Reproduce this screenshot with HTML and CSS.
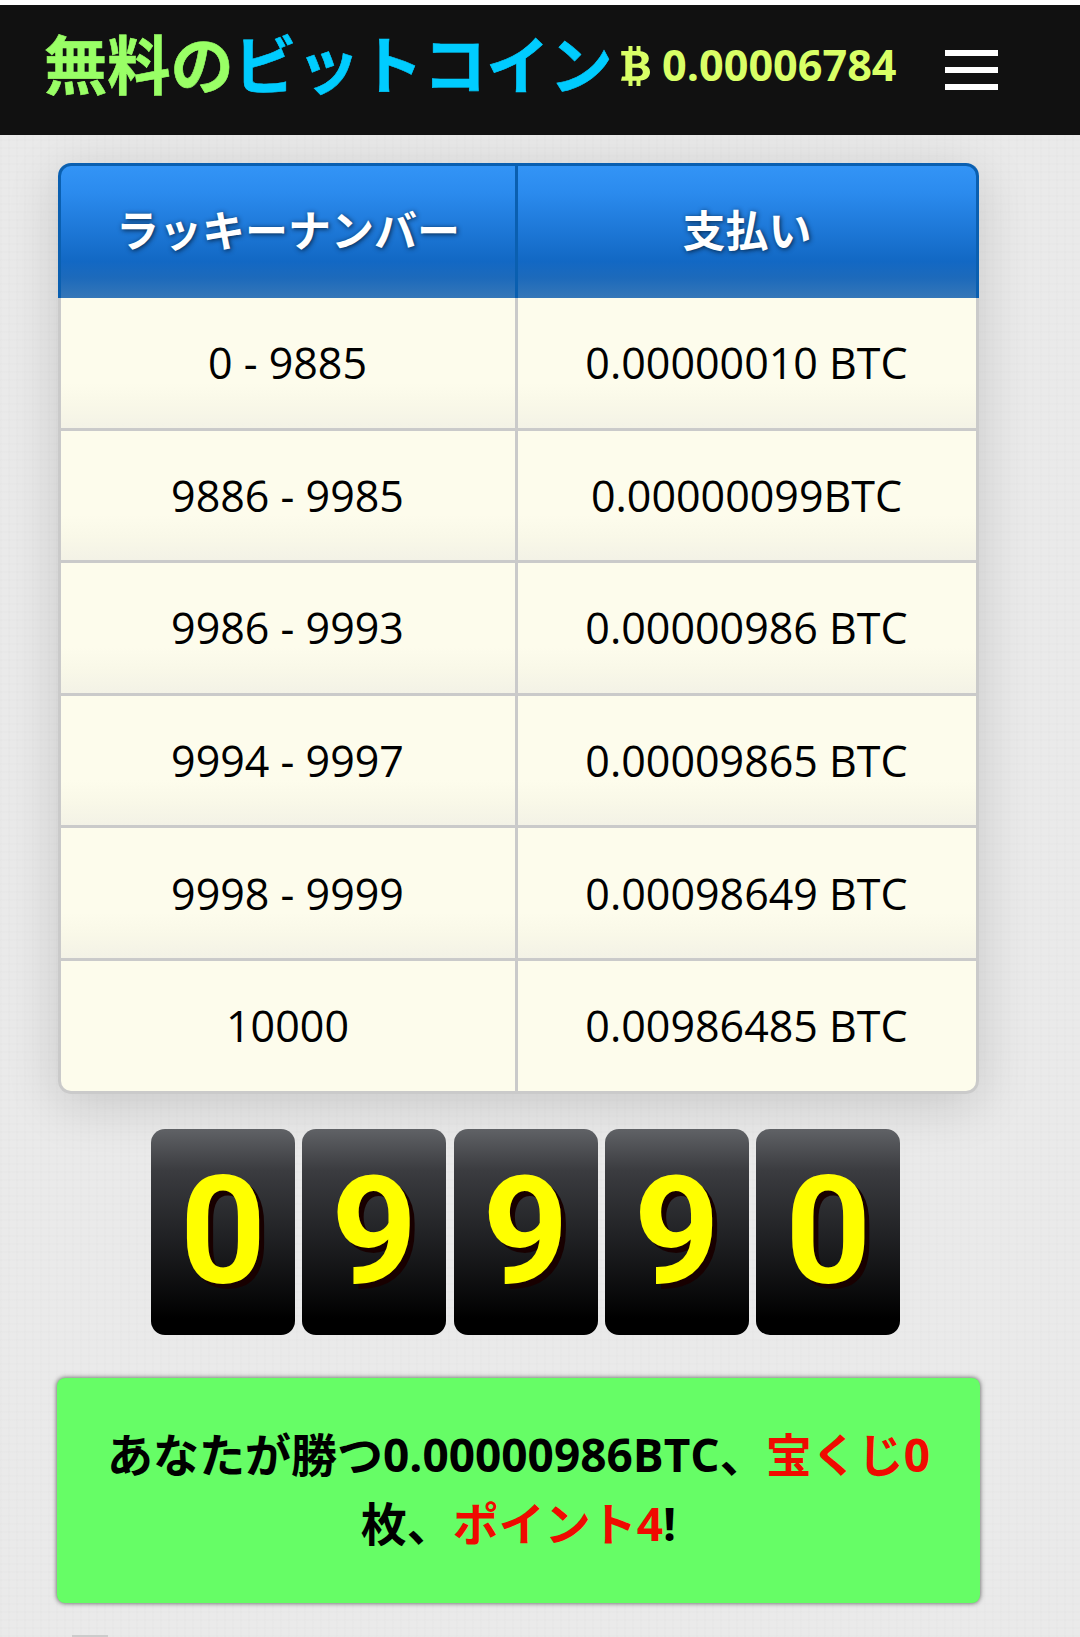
FILE: index.html
```html
<!DOCTYPE html>
<html lang="ja">
<head>
<meta charset="utf-8">
<title>無料のビットコイン</title>
<link rel="stylesheet" href="styles.css">
</head>
<body>
<header class="topbar">
  <h1 class="brand"><span class="brand-free">無料の</span><span class="brand-coin">ビットコイン</span></h1>
  <div class="balance">
    <svg class="btc" viewBox="0 0 30 40" aria-hidden="true"><path fill="currentColor" fill-rule="evenodd" d="M7.5 0h4v5h4V0h4v5.3c5 .6 8.3 3.200 8.300 7.200 0 3.200-1.800 5.400-4.600 6.500 3.800.9 5.800 3.400 5.800 6.900 0 5-3.700 8-9.500 8.600V40h-4v-5.300h-4V40h-4v-5.300H0l1-4.200h3.300V9.500H.2V5h7.300zM11.300 9.500v8.200h4c3.600 0 5.300-1.400 5.300-4.100s-1.800-4.100-5.300-4.100zm0 12.200v8.600h4.500c3.900 0 6-1.500 6-4.300s-2.100-4.300-6-4.300z"/></svg>
    <span>0.00006784</span>
  </div>
  <button class="menu" aria-label="メニュー"><i></i><i></i><i></i></button>
</header>
<main class="content">
  <table class="payouts">
    <thead><tr><th>ラッキーナンバー</th><th>支払い</th></tr></thead>
    <tbody>
      <tr><td>0 - 9885</td><td>0.00000010 BTC</td></tr>
      <tr><td>9886 - 9985</td><td>0.00000099BTC</td></tr>
      <tr><td>9986 - 9993</td><td>0.00000986 BTC</td></tr>
      <tr><td>9994 - 9997</td><td>0.00009865 BTC</td></tr>
      <tr><td>9998 - 9999</td><td>0.00098649 BTC</td></tr>
      <tr><td>10000</td><td>0.00986485 BTC</td></tr>
    </tbody>
  </table>
  <div class="roll"><span>0</span><span>9</span><span>9</span><span>9</span><span>0</span></div>
  <p class="result">あなたが勝つ0.00000986BTC、<em>宝くじ0</em><br>枚、<em>ポイント4</em>!</p>
  <div class="next"></div>
</main>
</body>
</html>
```
FILE: styles.css
```css
* { box-sizing: border-box; }

body {
  margin: 0;
  height: 1637px;
  overflow: hidden;
  border-top: 5px solid #fff;
  background-color: #eaeaea;
  background-image:
    repeating-linear-gradient(0deg, rgba(0, 0, 0, .007) 0 2px, transparent 2px 8px),
    repeating-linear-gradient(90deg, rgba(0, 0, 0, .007) 0 2px, transparent 2px 8px);
  font-family: "Open Sans", "Noto Sans CJK JP", sans-serif;
  color: #000;
}

.topbar {
  position: relative;
  z-index: 1;
  display: flex;
  align-items: flex-start;
  height: 130px;
  padding-left: 44px;
  background: #111;
}

.brand {
  margin: 0;
  width: 577px;
  font-size: 63.200px;
  line-height: 119px;
  white-space: nowrap;
  -webkit-text-stroke: .6px currentColor;
}
.brand-free { color: #99ff66; }
.brand-coin { color: #0cf; }

.balance {
  display: flex;
  width: 324px;
  gap: 11px;
  font-size: 43.200px;
  font-weight: 700;
  line-height: 119px;
  color: #d9ff66;
}
.btc { width: 30px; height: 40px; margin-top: 41px; }

.menu {
  display: flex;
  flex-direction: column;
  gap: 11px;
  margin: 45px 0 0;
  padding: 0;
  border: 0;
  background: none;
}
.menu i { width: 53px; height: 6px; background: #fff; }

.content {
  display: flex;
  flex-direction: column;
  width: 923px;
  margin: 28px 0 0 57px;
}

.payouts {
  width: 921px;
  margin-left: 1px;
  border-collapse: separate;
  border-spacing: 0;
  table-layout: fixed;
  border-radius: 13px;
  box-shadow: 0 10px 52px rgba(0, 0, 0, .15);
  font-size: 43px;
  text-align: center;
}
.payouts th {
  height: 135px;
  padding: 0 0 8px;
  border: solid #0a5fb0;
  border-width: 3px 3px 0 0;
  background: linear-gradient(#3394f6 0%, #2b8bee 20%, #1268c4 72%, #1d6abb 85%, #3577b8 100%);
  color: #fff;
  text-shadow: 1px 1px 5px rgba(0, 20, 40, .85);
}
.payouts th:first-child { width: 460px; border-left-width: 3px; border-top-left-radius: 13px; }
.payouts th:last-child { border-top-right-radius: 13px; }
.payouts td {
  height: 132.600px;
  padding: 0 1px 0 0;
  border: solid #cacaca;
  border-width: 0 3px 3px 0;
  background: linear-gradient(#fdfcec 65%, #f9f8e8 82%, #f3f2e6 100%);
}
.payouts td:first-child { border-left-width: 3px; }
.payouts tr:last-child td { background: #fdfcec; }
.payouts tr:last-child td:first-child { border-bottom-left-radius: 13px; }
.payouts tr:last-child td:last-child { border-bottom-right-radius: 13px; }

.roll {
  display: flex;
  gap: 7.300px;
  margin: 35px 0 0 94px;
}
.roll span {
  width: 144px;
  height: 206px;
  border-radius: 14px;
  background: linear-gradient(#606266 0%, #3b3c40 20%, #222326 50%, #000 92%);
  color: #ff0;
  font: 700 150px/206px Roboto, sans-serif;
  text-align: center;
  text-shadow: 5px 5px 0 #180000;
}

.result {
  margin: 43px 0 0;
  height: 225px;
  padding-top: 42px;
  border-radius: 8px;
  background: #66fd66;
  box-shadow: 0 0 5px rgba(0, 0, 0, .65);
  font-size: 46px;
  font-weight: 700;
  line-height: 69px;
  text-align: center;
}
.result em { font-style: normal; color: #f00a00; }

.next { width: 36px; height: 3px; margin: 32px 0 0 15px; background: #ccc; }
```
